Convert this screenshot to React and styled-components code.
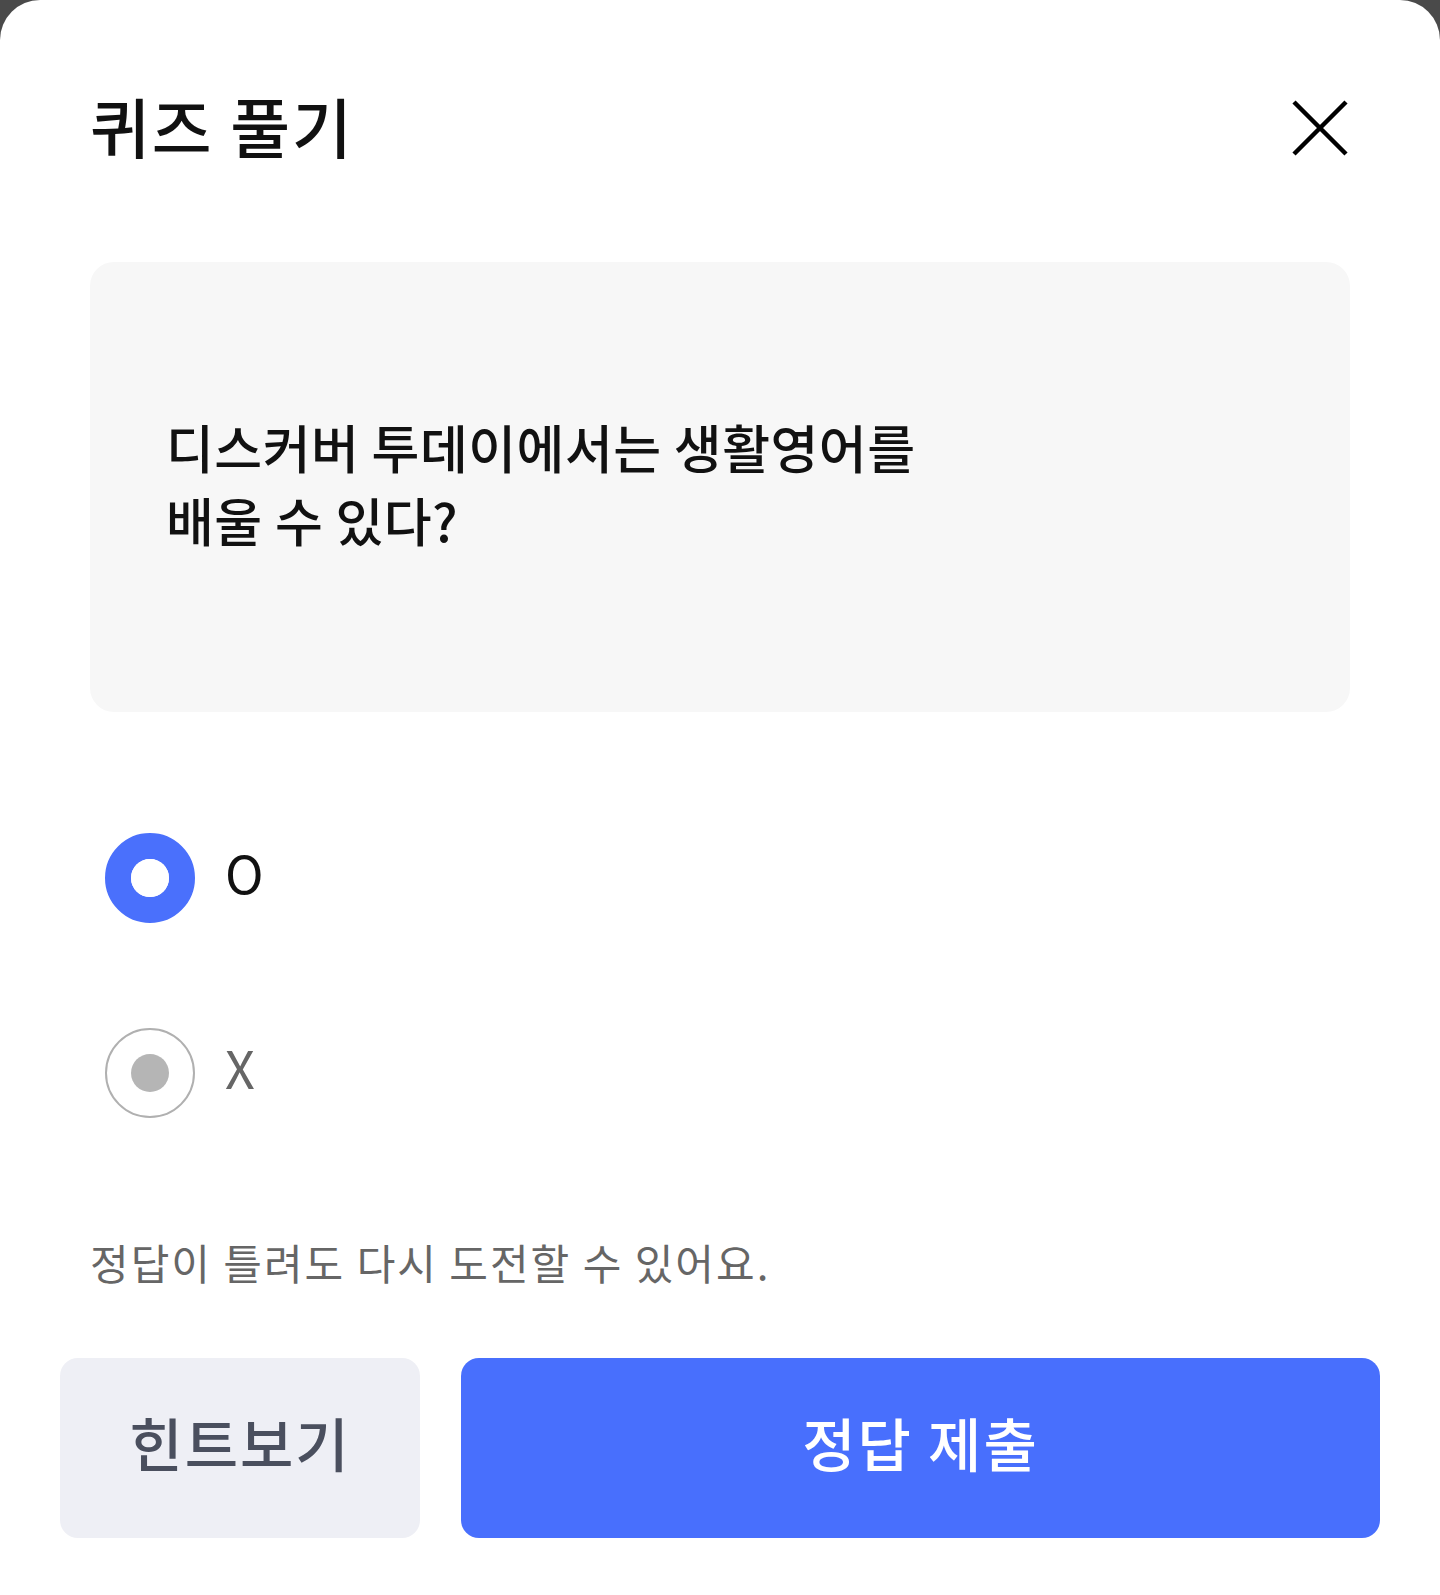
import React, {useState} from 'react'
import styled, {createGlobalStyle} from 'styled-components'

const GlobalStyle = createGlobalStyle`
  * { box-sizing: border-box; }
  html, body {
    margin: 0;
    padding: 0;
    background: #4a4a4a;
    font-family: "Noto Sans CJK KR", "Noto Sans", sans-serif;
  }
`

const Sheet = styled.div`
  background: #fff;
  border-radius: 40px 40px 0 0;
  min-height: 1595px;
  display: flex;
  flex-direction: column;
`

const Header = styled.div`
  display: flex;
  align-items: center;
  justify-content: space-between;
  height: 256px;
  padding: 0 92px 6px 90px;
`

const Title = styled.h1`
  margin: 0;
  font-size: 65px;
  font-weight: 500;
  color: #111;
  letter-spacing: 2px;
`

const CloseButton = styled.button`
  border: 0;
  background: none;
  padding: 0;
  width: 56px;
  height: 56px;
  margin-top: 6px;
  display: flex;
  cursor: pointer;
`

const Body = styled.div`
  padding: 6px 90px 0;
`

const QuestionBox = styled.div`
  background: #f7f7f7;
  border-radius: 24px;
  height: 450px;
  padding: 0 76px 8px;
  display: flex;
  align-items: center;
`

const Question = styled.p`
  margin: 0;
  font-size: 52px;
  line-height: 73px;
  font-weight: 500;
  color: #111;
  letter-spacing: 0.5px;
`

const Options = styled.div`
  margin-top: 68px;
  display: flex;
  flex-direction: column;
`

const Option = styled.label`
  height: 195px;
  display: flex;
  align-items: center;
  gap: 30px;
  padding-left: 15px;
  cursor: pointer;
`

const Radio = styled.span`
  width: 90px;
  height: 90px;
  border-radius: 50%;
  flex-shrink: 0;
  display: flex;
  align-items: center;
  justify-content: center;
  background: #fff;
  border: ${p => (p.checked ? '26px solid #4a70fc' : '2px solid #b0b0b0')};
  &::after {
    content: '';
    width: 38px;
    height: 38px;
    border-radius: 50%;
    background: ${p => (p.checked ? '#fff' : '#b5b5b5')};
  }
`

const OptionLabel = styled.span`
  font-size: 52px;
  line-height: 1;
  margin-bottom: 12px;
  color: ${p => (p.checked ? '#111' : '#666')};
`

const Hint = styled.p`
  margin: 62px 0 0;
  font-size: 42px;
  line-height: 60px;
  color: #666;
  letter-spacing: 2px;
`

const Actions = styled.div`
  display: flex;
  gap: 41px;
  padding: 0 60px;
  margin-top: 66px;
`

const Button = styled.button`
  height: 180px;
  border: 0;
  border-radius: 18px;
  font-family: inherit;
  font-size: 58px;
  font-weight: 500;
  letter-spacing: 2px;
  padding-bottom: 14px;
  cursor: pointer;
  background: ${p => (p.primary ? '#486ffd' : '#eeeff5')};
  color: ${p => (p.primary ? '#fff' : '#4a4f5e')};
  width: ${p => (p.primary ? 'auto' : '360px')};
  flex: ${p => (p.primary ? 1 : 'none')};
`

const options = ['O', 'X']

export default function App(){
  const [answer, setAnswer] = useState('O')

  return (
    <>
      <GlobalStyle />
      <Sheet>
        <Header>
          <Title>퀴즈 풀기</Title>
          <CloseButton aria-label='닫기'>
            <svg width='56' height='56' viewBox='0 0 56 56'>
              <path d='M2 2 L54 54 M54 2 L2 54' stroke='#000' strokeWidth='4.5' />
            </svg>
          </CloseButton>
        </Header>

        <Body>
          <QuestionBox>
            <Question>
              디스커버 투데이에서는 생활영어를<br />배울 수 있다?
            </Question>
          </QuestionBox>

          <Options>
            {options.map(o => (
              <Option key={o} onClick={() => setAnswer(o)}>
                <Radio checked={answer === o} />
                <OptionLabel checked={answer === o}>{o}</OptionLabel>
              </Option>
            ))}
          </Options>

          <Hint>정답이 틀려도 다시 도전할 수 있어요.</Hint>
        </Body>

        <Actions>
          <Button>힌트보기</Button>
          <Button primary>정답 제출</Button>
        </Actions>
      </Sheet>
    </>
  )
}
